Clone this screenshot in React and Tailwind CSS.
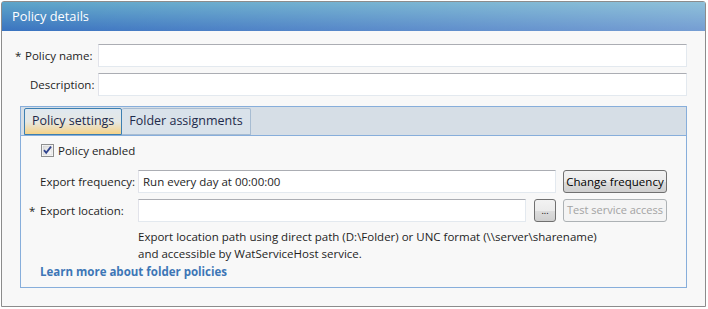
import React from "react";

function TextBox({ className = "", children }) {
  return (
    <div
      className={
        "h-[23px] bg-white border border-[#e3e9ef] border-t-[#abadb3] border-l-[#e2e3ea] flex items-center px-[4px] whitespace-nowrap " +
        className
      }
    >
      {children}
    </div>
  );
}

function Check() {
  return (
    <svg width="13" height="13" viewBox="0 0 13 13" className="shrink-0">
      <defs>
        <linearGradient id="cbg" x1="0" y1="0" x2="1" y2="1">
          <stop offset="0" stopColor="#dcdcdc" />
          <stop offset="1" stopColor="#fbfbfb" />
        </linearGradient>
      </defs>
      <rect x="0.5" y="0.5" width="12" height="12" fill="#fff" stroke="#8e8f8f" />
      <rect x="2" y="2" width="9" height="9" fill="url(#cbg)" stroke="#c4c4c4" strokeWidth="0.5" />
      <path d="M3 6.2 L5.2 8.8 L10 2.6" fill="none" stroke="#31448e" strokeWidth="1.8" />
    </svg>
  );
}

const btn =
  "h-[23px] rounded-[3px] border border-[#707070] bg-[linear-gradient(to_bottom,#f2f2f2_0%,#ebebeb_50%,#dddddd_51%,#cfcfcf_100%)] text-black whitespace-nowrap";

export default function App() {
  const font = { fontFamily: '"Open Sans", "Noto Sans", sans-serif' };
  return (
    <div className="w-[708px] h-[309px] bg-white pt-[1px] pl-[1px]" style={font}>
      <div className="w-[705px] h-[306px] border border-[#8c8c8c] bg-[#f8f8f8] rounded-t-[3px] flex flex-col text-[11.5px] text-[#1e1e1e]">
        <div className="h-[29px] shrink-0 flex items-center px-[10px] text-white text-[12.8px] bg-[linear-gradient(to_right,rgba(255,255,255,0)_0%,rgba(255,255,255,0.3)_100%),linear-gradient(to_bottom,#5ea6c9,#3a73c0)]">
          Policy details
        </div>
        <div className="flex-1 pt-[13px] pr-[18px]">
          <div className="grid grid-cols-[96px_1fr] gap-y-[6px] items-center">
            <div className="pl-[13px] flex">
              <span className="w-[10px]">*</span>
              <span>Policy name:</span>
            </div>
            <TextBox />
            <div className="pl-[28px]">Description:</div>
            <TextBox />
          </div>
          <div className="ml-[18px] mt-[10px] h-[182px] border border-[#87aedb] flex flex-col">
            <div className="h-[29px] shrink-0 bg-[#d6dee6] border-b border-[#87aedb] flex items-end pl-[3px] text-[12.5px]">
              <div className="h-[27px] px-[7px] flex items-center border border-[#3c7fb1] rounded-t-[2px] bg-[linear-gradient(to_bottom,#dfe8f0_0%,#e6e8e4_50%,#f5d288_100%)] text-[#1e2a4a]">
                Policy settings
              </div>
              <div className="h-[27px] px-[7px] flex items-center border border-l-0 border-[#a7bcd2] rounded-t-[2px] bg-[#d9e2ea] text-[#1e2a4a]">
                Folder assignments
              </div>
            </div>
            <div className="flex-1 px-[19px] pt-[8px]">
              <div className="flex items-center gap-[4px] h-[13px] pl-[1px]">
                <Check />
                <span>Policy enabled</span>
              </div>
              <div className="mt-[13px] grid grid-cols-[91px_1fr_auto] gap-x-[7px] gap-y-[6px] items-center">
                <div className="whitespace-nowrap">Export frequency:</div>
                <TextBox>Run every day at 00:00:00</TextBox>
                <button className={btn + " w-[104px]"}>Change frequency</button>
                <div className="relative whitespace-nowrap">
                  <span className="absolute left-[-11px]">*</span>
                  Export location:
                </div>
                <div className="flex gap-[8px]">
                  <TextBox className="flex-1" />
                  <button className={btn + " w-[22px] text-[9px] leading-[20px]"}>...</button>
                </div>
                <button className="h-[23px] w-[104px] rounded-[3px] border border-[#adb2b5] bg-[#f4f4f4] text-[11px] text-[#a3a3a3] whitespace-nowrap">
                  Test service access
                </button>
                <div />
                <div className="col-span-2 leading-[17px] whitespace-nowrap">
                  <div>Export location path using direct path (D:\Folder) or UNC format (\\server\sharename)</div>
                  <div>and accessible by WatServiceHost service.</div>
                </div>
              </div>
              <div className="mt-[1px] font-bold text-[#3d76b6] leading-[17px]">Learn more about folder policies</div>
            </div>
          </div>
        </div>
      </div>
    </div>
  );
}
